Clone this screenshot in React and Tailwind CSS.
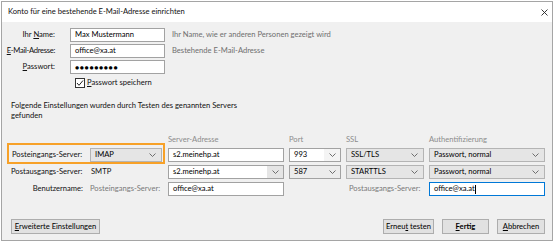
import React from "react";

const font = "font-['Lato','Liberation_Sans',sans-serif]";

function Chevron() {
  return (
    <svg width="7" height="4" viewBox="0 0 7 4" className="shrink-0">
      <polyline points="0.5,0.5 3.5,3.5 6.5,0.5" fill="none" stroke="#606060" strokeWidth="0.9" />
    </svg>
  );
}

function Input({ children, focused = false, className = "" }) {
  return (
    <div
      className={`h-[14px] bg-white border ${focused ? "border-[#0078d7]" : "border-[#a2a2a2]"} flex items-center px-[4px] text-black ${className}`}
    >
      {children}
    </div>
  );
}

function Select({ value, className = "" }) {
  return (
    <div className={`h-[14px] bg-[#e5e5e5] border border-[#b4b4b4] flex items-center justify-between pl-[4px] pr-[5px] text-black ${className}`}>
      <span>{value}</span>
      <Chevron />
    </div>
  );
}

function Combo({ value, btnBg = "bg-white", fieldBg = "bg-white", className = "" }) {
  return (
    <div className={`h-[14px] border border-[#a2a2a2] flex text-black ${className}`}>
      <div className={`flex-1 flex items-center pl-[4px] ${fieldBg}`}>{value}</div>
      <div className={`w-[16px] flex items-center justify-center ${btnBg}`}>
        <Chevron />
      </div>
    </div>
  );
}

function Button({ children, bold = false, className = "" }) {
  return (
    <button className={`h-[15px] bg-[#e1e1e1] border border-[#adadad] text-black flex items-center justify-center ${bold ? "font-bold" : ""} ${className}`}>
      {children}
    </button>
  );
}

export default function App() {
  return (
    <div className={`w-[555px] h-[242px] bg-white pt-[1px] pl-[1px] ${font} text-[7.6px] leading-none text-[#111]`}>
      <div className="w-[552px] h-[240px] border border-[#a5a5a5] flex flex-col">
        {/* Title bar */}
        <div className="h-[20px] bg-white flex items-center justify-between pl-[6px] pr-[4px] shrink-0">
          <span>Konto für eine bestehende E-Mail-Adresse einrichten</span>
          <svg width="7" height="7" viewBox="0 0 7 7">
            <path d="M0.5 0.5 L6.5 6.5 M6.5 0.5 L0.5 6.5" stroke="#222" strokeWidth="0.9" />
          </svg>
        </div>

        {/* Body */}
        <div className="relative flex-1 bg-[#f0f0f0] flex flex-col pt-[6px]">
          <div className="flex flex-col gap-[2px]">
            <div className="flex items-center h-[14px]">
              <span className="w-[53px] text-right">Ihr <u>N</u>ame:</span>
              <Input className="ml-[15px] w-[95px]">Max Mustermann</Input>
              <span className="ml-[7px] text-[#6f6f6f]">Ihr Name, wie er anderen Personen gezeigt wird</span>
            </div>
            <div className="flex items-center h-[14px]">
              <span className="w-[53px] text-right whitespace-nowrap tracking-[-0.3px]"><u>E</u>-Mail-Adresse:</span>
              <Input className="ml-[15px] w-[95px]">office@xa.at</Input>
              <span className="ml-[7px] text-[#6f6f6f]">Bestehende E-Mail-Adresse</span>
            </div>
            <div className="flex items-center h-[14px]">
              <span className="w-[53px] text-right"><u>P</u>asswort:</span>
              <Input className="ml-[15px] w-[95px] text-[7px] tracking-[0.6px]">●●●●●●●●●</Input>
            </div>
          </div>

          <div className="flex items-center h-[10px] mt-[4px] ml-[73px]">
            <div className="w-[10px] h-[10px] bg-white border border-[#333] flex items-center justify-center">
              <svg width="8" height="8" viewBox="0 0 8 8">
                <polyline points="1,4 3,6.3 7,1.5" fill="none" stroke="#222" strokeWidth="1" />
              </svg>
            </div>
            <span className="ml-[2px]"><u>P</u>asswort speichern</span>
          </div>

          <p className="mt-[12px] ml-[9px] leading-[10px]">
            Folgende Einstellungen wurden durch Testen des genannten Servers
            <br />
            gefunden
          </p>

          {/* Server grid */}
          <div className="mt-[16px] ml-[9px] grid grid-cols-[74px_73px_116px_52px_78px_116px] gap-x-[5px] gap-y-[3px] items-center">
            <span />
            <span />
            <span className="h-[10px] mb-[-1px] text-[#8c8c8c]">Server-Adresse</span>
            <span className="h-[10px] mb-[-1px] text-[#8c8c8c]">Port</span>
            <span className="h-[10px] mb-[-1px] text-[#8c8c8c]">SSL</span>
            <span className="h-[10px] mb-[-1px] text-[#8c8c8c]">Authentifizierung</span>

            <span className="pl-[1px]">Posteingangs-Server:</span>
            <Select value="IMAP" className="w-[72px]" />
            <Input>s2.meinehp.at</Input>
            <Combo value="993" btnBg="bg-[#f4f4f4]" />
            <Select value="SSL/TLS" />
            <Select value="Passwort, normal" />

            <span>Postausgangs-Server:</span>
            <span className="pl-[1px]">SMTP</span>
            <Combo value="s2.meinehp.at" btnBg="bg-[#e5e5e5]" />
            <Combo value="587" fieldBg="bg-[#ececec]" btnBg="bg-[#ececec]" />
            <Select value="STARTTLS" />
            <Select value="Passwort, normal" />

            <span className="text-right pr-[2px]">Benutzername:</span>
            <span className="text-[#7a7a7a]">Posteingangs-Server:</span>
            <Input>office@xa.at</Input>
            <span />
            <span className="pl-[3px] text-[#7a7a7a]">Postausgangs-Server:</span>
            <Input focused>
              office@xa.at
              <span className="inline-block w-[1px] h-[9px] bg-black ml-[0.5px]" />
            </Input>
          </div>

          {/* Highlight */}
          <div className="absolute left-[5px] top-[121px] w-[158px] h-[21px] border-2 border-[#f7a128]" />

          {/* Buttons */}
          <div className="mt-auto mb-[6px] flex items-center pl-[9px] pr-[7px]">
            <Button className="w-[89px]"><span><u>E</u>rweiterte Einstellungen</span></Button>
            <div className="ml-auto flex gap-[8px]">
              <Button className="w-[51px]"><span>Erneu<u>t</u> testen</span></Button>
              <Button bold className="w-[47px]"><span><u>F</u>ertig</span></Button>
              <Button className="w-[48px]"><span><u>A</u>bbrechen</span></Button>
            </div>
          </div>
        </div>
      </div>
    </div>
  );
}
